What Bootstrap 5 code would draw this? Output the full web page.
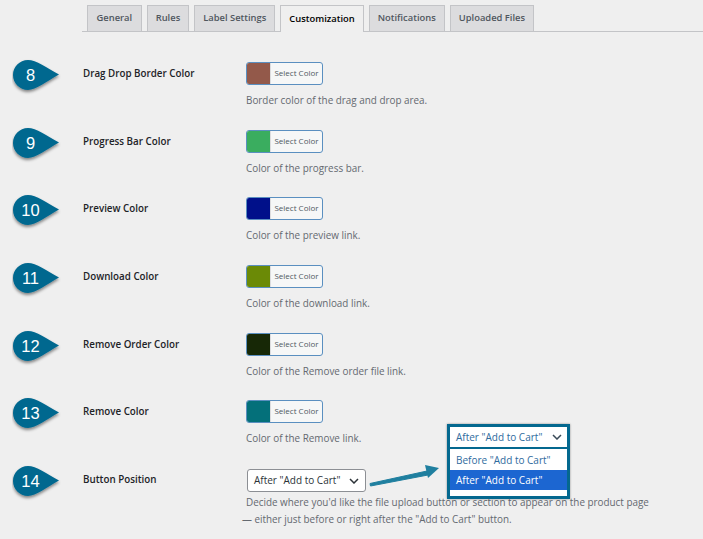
<!DOCTYPE html>
<html lang="en">
<head>
<meta charset="utf-8">
<title>Customization</title>
<link href="https://cdn.jsdelivr.net/npm/bootstrap@5.3.0/dist/css/bootstrap.min.css" rel="stylesheet">
<style>
html,body{height:100%;overflow:hidden}
body{background:#efefef;font-family:"Open Sans","Noto Sans",sans-serif;font-size:10px;color:#2c3338;position:relative}
.tabbar{margin-left:82px;padding:5px 0 0 5px;height:32px;border-bottom:1px solid #c3c4c7;gap:5px}
.tabitem{height:26px;padding:0 8px;display:flex;align-items:center;background:#dcdcde;border:1px solid #c3c4c7;border-bottom:0;color:#50575e;font-weight:600;font-size:9.4px;text-decoration:none}
.tabitem:first-child{padding:0 8.500px}
.tabitem.on{background:#efefef;color:#000;height:27px;margin-bottom:-1px}
.setrows{padding-top:30px}
.setrow{height:67.7px;display:flex;align-items:flex-start}
.pincell{width:83px;padding-left:12px;flex:none;position:relative;height:34px;margin-top:-3px}
.pinshape{display:block;position:absolute;left:12px;top:0}
.pinnum{position:relative;width:36px;padding-left:1px;height:32px;line-height:32px;text-align:center;color:#fff;font-size:16.5px;font-family:"Liberation Sans",sans-serif}
.lbl{width:163px;flex:none;font-weight:600;font-size:9.8px;color:#1d2327;line-height:14px;padding-top:5px}
.colorbtn{display:flex;width:77px;height:23px;border:1px solid #5a8fc0;border-radius:3px;background:#f6f7f7;overflow:hidden}
.swatchbox{width:23px;flex:none}
.swatchtxt{flex:1;text-align:center;font-size:8px;line-height:20px;color:#50575e;border-left:1px solid #dcdcde}
.hint{color:#646970;font-size:9.9px;margin-top:7px;line-height:17px}
.selbox{width:119px;height:23px;margin:1px 0 0 1px;border:1px solid #8c8f94;border-radius:3px;background:#fff;padding:0 6px;font-size:10px;color:#2c3338;display:flex;align-items:center;justify-content:space-between}
.hintwide{margin-top:2px;margin-left:-4px;width:440px;white-space:nowrap}
.hintwide span{display:block;padding-left:4px}
.hintwide span+span{padding-left:0}
.callout{position:absolute;left:447px;top:424px;width:123px;height:75px;border:3px solid #04688f;background:#fff;box-shadow:0 0 2px rgba(0,0,0,.4)}
.calltop{height:22px;border-bottom:2px solid #04688f;margin:0;padding:0 5px 0 6px;display:flex;align-items:center;justify-content:space-between;color:#2f6b9e;font-size:10px}
.callopt{height:21px;line-height:22px;padding-left:6px;color:#2f6b9e;font-size:10px}
.callopt.pick{height:20px;line-height:20px;background:#1c66d1;color:#fff}
.arrowmark{position:absolute;left:366px;top:462px}
</style>
</head>
<body>
<nav class="tabbar d-flex">
<a class="tabitem" href="#">General</a>
<a class="tabitem" href="#">Rules</a>
<a class="tabitem" href="#">Label Settings</a>
<a class="tabitem on" href="#">Customization</a>
<a class="tabitem" href="#">Notifications</a>
<a class="tabitem" href="#">Uploaded Files</a>
</nav>
<svg width="0" height="0" class="position-absolute"><defs>
<symbol id="pinmark" viewBox="0 0 50 36"><path d="M16 1C24 1 35 9 47 15.500C35 22 24 31 16 31C7.500 31 1 24 1 16S7.500 1 16 1Z" fill="#04688f"/></symbol>
<filter id="pinsh" x="-20%" y="-20%" width="140%" height="150%"><feDropShadow dx="0" dy="2" stdDeviation="1.500" flood-color="#000" flood-opacity=".45"/></filter>
</defs></svg>
<main class="setrows">
<section class="setrow"><div class="pincell"><svg class="pinshape" width="50" height="36"><use href="#pinmark" filter="url(#pinsh)"/></svg><div class="pinnum">8</div></div><div class="lbl">Drag Drop Border Color</div><div><div class="colorbtn"><div class="swatchbox" style="background:#93594a"></div><div class="swatchtxt">Select Color</div></div><div class="hint">Border color of the drag and drop area.</div></div></section>
<section class="setrow"><div class="pincell"><svg class="pinshape" width="50" height="36"><use href="#pinmark" filter="url(#pinsh)"/></svg><div class="pinnum">9</div></div><div class="lbl">Progress Bar Color</div><div><div class="colorbtn"><div class="swatchbox" style="background:#3aad5f"></div><div class="swatchtxt">Select Color</div></div><div class="hint">Color of the progress bar.</div></div></section>
<section class="setrow"><div class="pincell"><svg class="pinshape" width="50" height="36"><use href="#pinmark" filter="url(#pinsh)"/></svg><div class="pinnum">10</div></div><div class="lbl">Preview Color</div><div><div class="colorbtn"><div class="swatchbox" style="background:#00108a"></div><div class="swatchtxt">Select Color</div></div><div class="hint">Color of the preview link.</div></div></section>
<section class="setrow"><div class="pincell"><svg class="pinshape" width="50" height="36"><use href="#pinmark" filter="url(#pinsh)"/></svg><div class="pinnum">11</div></div><div class="lbl">Download Color</div><div><div class="colorbtn"><div class="swatchbox" style="background:#6b8a06"></div><div class="swatchtxt">Select Color</div></div><div class="hint">Color of the download link.</div></div></section>
<section class="setrow"><div class="pincell"><svg class="pinshape" width="50" height="36"><use href="#pinmark" filter="url(#pinsh)"/></svg><div class="pinnum">12</div></div><div class="lbl">Remove Order Color</div><div><div class="colorbtn"><div class="swatchbox" style="background:#172806"></div><div class="swatchtxt">Select Color</div></div><div class="hint">Color of the Remove order file link.</div></div></section>
<section class="setrow"><div class="pincell"><svg class="pinshape" width="50" height="36"><use href="#pinmark" filter="url(#pinsh)"/></svg><div class="pinnum">13</div></div><div class="lbl">Remove Color</div><div><div class="colorbtn"><div class="swatchbox" style="background:#04707a"></div><div class="swatchtxt">Select Color</div></div><div class="hint">Color of the Remove link.</div></div></section>
<section class="setrow"><div class="pincell"><svg class="pinshape" width="50" height="36"><use href="#pinmark" filter="url(#pinsh)"/></svg><div class="pinnum">14</div></div><div class="lbl">Button Position</div><div><div class="selbox"><span>After "Add to Cart"</span><svg width="10" height="6" viewBox="0 0 10 6"><path d="M1 1l4 4 4-4" fill="none" stroke="#2c3338" stroke-width="1.500"/></svg></div><div class="hint hintwide"><span>Decide where you'd like the file upload button or section to appear on the product page</span><span>— either just before or right after the "Add to Cart" button.</span></div></div></section>
</main>
<svg class="arrowmark" width="80" height="30" viewBox="0 0 80 30"><path d="M4 21.500L4.500 24L62 13L61 9Z" fill="#1f7f9f" stroke="#1f7f9f" stroke-linejoin="round"/><path d="M73 6L59 3L62 16Z" fill="#1f7f9f"/></svg>
<div class="callout">
<div class="calltop"><span>After "Add to Cart"</span><svg width="10" height="6" viewBox="0 0 10 6"><path d="M1 1l4 4 4-4" fill="none" stroke="#3a4a58" stroke-width="1.500"/></svg></div>
<div class="callopt">Before "Add to Cart"</div>
<div class="callopt pick">After "Add to Cart"</div>
</div>
</body>
</html>
